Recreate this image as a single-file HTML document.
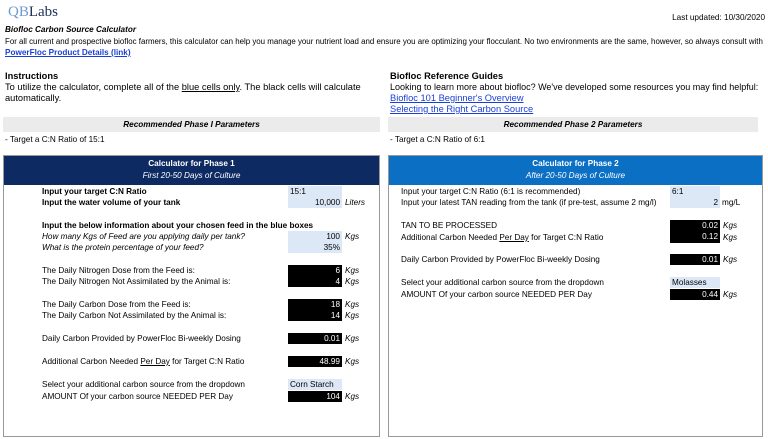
<!DOCTYPE html>
<html><head><meta charset="utf-8"><style>
*{margin:0;padding:0;box-sizing:border-box}
body{width:768px;height:439px;background:#fff;position:relative;overflow:hidden;font-family:"Liberation Sans",sans-serif;color:#000}
.a{position:absolute;white-space:nowrap;line-height:11px}
.c{font-size:8.2px}
.ar{font-size:9.3px}
.lnk{color:#1a3fd6;text-decoration:underline}
.bar{position:absolute;background:#ebebeb;height:15px;font-size:8.2px;font-weight:bold;font-style:italic;text-align:center;line-height:15px}
.panel{position:absolute;border:1px solid #999;top:155px;height:282px}
.hd{position:absolute;left:0;right:0;top:0;height:29px;color:#fff;text-align:center;font-size:8.2px;line-height:12px;padding-top:2px}
.in{position:absolute;background:#dde8f7;height:11px;font-size:8.2px;line-height:11px;padding:0 2px}
.bk{position:absolute;background:#000;color:#fff;height:11px;font-size:8.2px;line-height:11px;padding:0 2px;text-align:right}
.u{font-style:italic;font-size:8.2px}
</style></head><body>
<div class="a" style="left:8px;top:4px;font-family:'Liberation Serif',serif;font-size:15px;line-height:17px"><span style="color:#6e9bd0">QB</span><span style="color:#1b2e55">Labs</span></div>
<div class="a" style="right:3px;top:12px;font-size:8.2px">Last updated: 10/30/2020</div>
<div class="a c" style="left:5px;top:24px;font-weight:bold;font-style:italic">Biofloc Carbon Source Calculator</div>
<div class="a" style="left:5px;top:36px;font-size:7.9px">For all current and prospective biofloc farmers, this calculator can help you manage your nutrient load and ensure you are optimizing your flocculant. No two environments are the same, however, so always consult with</div>
<div class="a c lnk" style="left:5px;top:47px;font-weight:bold">PowerFloc Product Details (link)</div>

<div class="a ar" style="left:5px;top:71px;font-weight:bold">Instructions</div>
<div class="a ar" style="left:5px;top:82px">To utilize the calculator, complete all of the <u>blue cells only</u>. The black cells will calculate</div>
<div class="a ar" style="left:5px;top:93px">automatically.</div>

<div class="a ar" style="left:390px;top:71px;font-weight:bold">Biofloc Reference Guides</div>
<div class="a" style="left:390px;top:82px;font-size:9px">Looking to learn more about biofloc? We've developed some resources you may find helpful:</div>
<div class="a ar lnk" style="left:390px;top:93px">Biofloc 101 Beginner's Overview</div>
<div class="a ar lnk" style="left:390px;top:104px">Selecting the Right Carbon Source</div>

<div class="bar" style="left:3px;top:117px;width:377px">Recommended Phase I Parameters</div>
<div class="bar" style="left:388px;top:117px;width:370px">Recommended Phase 2 Parameters</div>
<div class="a c" style="left:5px;top:134px">- Target a C:N Ratio of 15:1</div>
<div class="a c" style="left:390px;top:134px">- Target a C:N Ratio of 6:1</div>

<div class="panel" style="left:3px;width:377px">
<div class="hd" style="background:#0e2a63"><b>Calculator for Phase 1</b><br><i>First 20-50 Days of Culture</i></div>
</div>
<div class="panel" style="left:388px;width:375px">
<div class="hd" style="background:#0b6fc4"><b>Calculator for Phase 2</b><br><i>After 20-50 Days of Culture</i></div>
</div>

<!-- left panel -->
<div class="a c" style="left:42px;top:186px;font-weight:bold">Input your target C:N Ratio</div>
<div class="in" style="left:288px;top:186px;width:54px;height:22px">15:1</div>
<div class="a c" style="left:42px;top:197px;font-weight:bold">Input the water volume of your tank</div>
<div class="a c" style="left:288px;top:197px;width:54px;text-align:right;padding-right:2px">10,000</div>
<div class="a u" style="left:345px;top:197px">Liters</div>
<div class="a c" style="left:42px;top:220px;font-weight:bold">Input the below information about your chosen feed in the blue boxes</div>
<div class="in" style="left:288px;top:231px;width:54px;height:22px"></div>
<div class="a c" style="left:42px;top:231px;font-style:italic">How many Kgs of Feed are you applying daily per tank?</div>
<div class="a c" style="left:288px;top:231px;width:54px;text-align:right;padding-right:2px">100</div>
<div class="a u" style="left:345px;top:231px">Kgs</div>
<div class="a c" style="left:42px;top:242px;font-style:italic">What is the protein percentage of your feed?</div>
<div class="a c" style="left:288px;top:242px;width:54px;text-align:right;padding-right:2px">35%</div>

<div class="a c" style="left:42px;top:265px">The Daily Nitrogen Dose from the Feed is:</div>
<div class="bk" style="left:288px;top:265px;width:54px;height:22px">6<br>4</div>
<div class="a u" style="left:345px;top:265px">Kgs</div>
<div class="a c" style="left:42px;top:276px">The Daily Nitrogen Not Assimilated by the Animal is:</div>
<div class="a u" style="left:345px;top:276px">Kgs</div>

<div class="a c" style="left:42px;top:299px">The Daily Carbon Dose from the Feed is:</div>
<div class="bk" style="left:288px;top:299px;width:54px;height:22px">18<br>14</div>
<div class="a u" style="left:345px;top:299px">Kgs</div>
<div class="a c" style="left:42px;top:310px">The Daily Carbon Not Assimilated by the Animal is:</div>
<div class="a u" style="left:345px;top:310px">Kgs</div>

<div class="a c" style="left:42px;top:333px">Daily Carbon Provided by PowerFloc Bi-weekly Dosing</div>
<div class="bk" style="left:288px;top:333px;width:54px">0.01</div>
<div class="a u" style="left:345px;top:333px">Kgs</div>

<div class="a c" style="left:42px;top:356px">Additional Carbon Needed <u>Per Day</u> for Target C:N Ratio</div>
<div class="bk" style="left:288px;top:356px;width:54px">48.99</div>
<div class="a u" style="left:345px;top:356px">Kgs</div>

<div class="a c" style="left:42px;top:379px">Select your additional carbon source from the dropdown</div>
<div class="in" style="left:288px;top:379px;width:54px">Corn Starch</div>
<div class="a c" style="left:42px;top:391px">AMOUNT Of your carbon source NEEDED PER Day</div>
<div class="bk" style="left:288px;top:391px;width:54px">104</div>
<div class="a u" style="left:345px;top:391px">Kgs</div>

<!-- right panel -->
<div class="a c" style="left:401px;top:186px">Input your target C:N Ratio (6:1 is recommended)</div>
<div class="in" style="left:670px;top:186px;width:50px;height:22px">6:1</div>
<div class="a c" style="left:401px;top:197px">Input your latest TAN reading from the tank (if pre-test, assume 2 mg/l)</div>
<div class="a c" style="left:670px;top:197px;width:50px;text-align:right;padding-right:2px">2</div>
<div class="a c" style="left:722px;top:197px">mg/L</div>

<div class="a c" style="left:401px;top:220px">TAN TO BE PROCESSED</div>
<div class="bk" style="left:670px;top:220px;width:50px;height:23px">0.02<br>0.12</div>
<div class="a u" style="left:723px;top:220px">Kgs</div>
<div class="a c" style="left:401px;top:232px">Additional Carbon Needed <u>Per Day</u> for Target C:N Ratio</div>
<div class="a u" style="left:723px;top:232px">Kgs</div>

<div class="a c" style="left:401px;top:254px">Daily Carbon Provided by PowerFloc Bi-weekly Dosing</div>
<div class="bk" style="left:670px;top:254px;width:50px">0.01</div>
<div class="a u" style="left:723px;top:254px">Kgs</div>

<div class="a c" style="left:401px;top:277px">Select your additional carbon source from the dropdown</div>
<div class="in" style="left:670px;top:277px;width:50px">Molasses</div>
<div class="a c" style="left:401px;top:289px">AMOUNT Of your carbon source NEEDED PER Day</div>
<div class="bk" style="left:670px;top:289px;width:50px">0.44</div>
<div class="a u" style="left:723px;top:289px">Kgs</div>
</body></html>
